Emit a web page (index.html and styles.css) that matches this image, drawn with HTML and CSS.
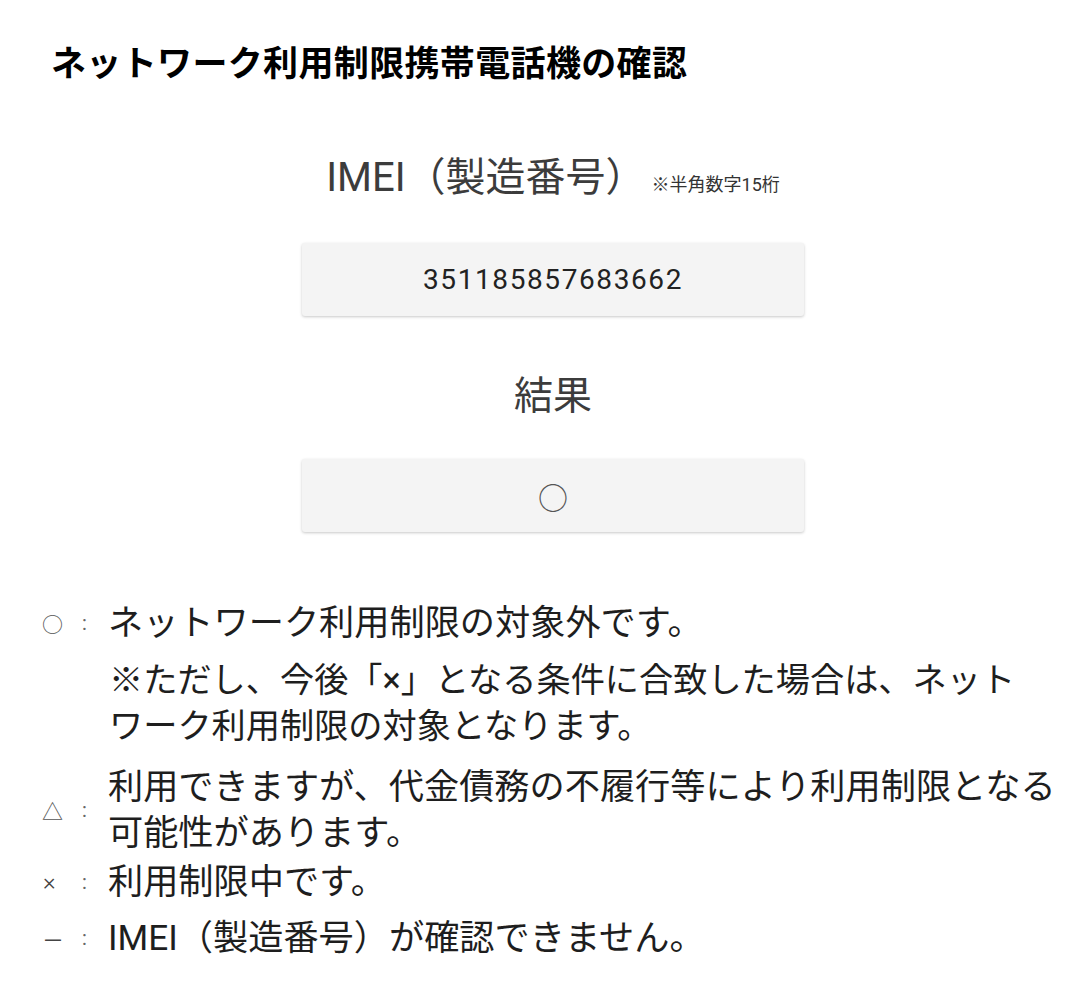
FILE: index.html
```html
<!DOCTYPE html>
<html lang="ja">
<head>
<meta charset="utf-8">
<title>ネットワーク利用制限携帯電話機の確認</title>
<link rel="stylesheet" href="styles.css">
</head>
<body>
<h1 class="page-title">ネットワーク利用制限携帯電話機の確認</h1>
<section class="check-form">
  <div class="field-label">IMEI（製造番号）<span class="field-note">※半角数字15桁</span></div>
  <div class="field-box field-box--imei">351185857683662</div>
  <div class="field-label field-label--result">結果</div>
  <div class="field-box field-box--result">○</div>
</section>
<section class="legend">
  <div class="legend-row legend-row--top">
    <span class="legend-sym legend-sym--circle">○</span>
    <span class="legend-colon">:</span>
    <div class="legend-text">
      <p class="legend-line">ネットワーク利用制限の対象外です。</p>
      <p class="legend-note">※ただし、今後「×」となる条件に合致した場合は、ネット<br>ワーク利用制限の対象となります。</p>
    </div>
  </div>
  <div class="legend-row legend-row--tri">
    <span class="legend-sym legend-sym--tri">△</span>
    <span class="legend-colon">:</span>
    <div class="legend-text">
      <p class="legend-line">利用できますが、代金債務の不履行等により利用制限となる<br>可能性があります。</p>
    </div>
  </div>
  <div class="legend-row legend-row--cross">
    <span class="legend-sym legend-sym--cross">×</span>
    <span class="legend-colon">:</span>
    <div class="legend-text">
      <p class="legend-line">利用制限中です。</p>
    </div>
  </div>
  <div class="legend-row legend-row--dash">
    <span class="legend-sym legend-sym--dash">－</span>
    <span class="legend-colon">:</span>
    <div class="legend-text">
      <p class="legend-line">IMEI（製造番号）が確認できません。</p>
    </div>
  </div>
</section>
</body>
</html>
```

FILE: styles.css
```css
html, body {
  margin: 0;
  padding: 0;
  background: #ffffff;
}

body {
  font-family: Roboto, "Noto Sans CJK JP", sans-serif;
  color: #1e1e1e;
  width: 1080px;
}

.page-title {
  margin: 0;
  padding: 36px 0 0 51px;
  font-family: "Noto Sans CJK JP", sans-serif;
  font-weight: 700;
  font-size: 35px;
  line-height: 50px;
  color: #000;
  letter-spacing: 0.35px;
}

.check-form {
  width: 502px;
  margin: 64px 0 0 302px;
  display: flex;
  flex-direction: column;
  align-items: stretch;
}

.field-label {
  text-align: center;
  font-size: 40px;
  line-height: 56px;
  height: 56px;
  color: #3c3c3c;
  font-weight: 400;
  white-space: nowrap;
}

.field-note {
  font-size: 18px;
  color: #333;
  margin-left: 6px;
}

.field-label--result {
  margin-top: 52px;
  font-size: 39px;
}

.field-box {
  height: 73px;
  background: #f4f4f4;
  border-radius: 3px;
  box-shadow: 0 1px 3px rgba(0, 0, 0, 0.22);
  display: flex;
  align-items: center;
  justify-content: center;
  color: #222;
}

.field-box--imei {
  margin-top: 37px;
  font-size: 28px;
  letter-spacing: 1.6px;
}

.field-box--result {
  margin-top: 35px;
  font-family: "Noto Sans CJK JP", sans-serif;
  font-size: 30px;
  color: #555;
}

.legend {
  margin-top: 68px;
  padding-left: 42px;
  display: flex;
  flex-direction: column;
}

.legend-row {
  display: grid;
  grid-template-columns: 26px 40px 1fr;
  align-items: start;
}

.legend-row--tri {
  margin-top: 15px;
  align-items: center;
}

.legend-row--cross {
  margin-top: 3px;
}

.legend-row--dash {
  margin-top: 10px;
}

.legend-sym {
  line-height: 46px;
  height: 46px;
  color: #555;
  font-family: "Noto Sans CJK JP", sans-serif;
  font-size: 21px;
}

.legend-sym--cross {
  font-family: Roboto, sans-serif;
  font-size: 24px;
  font-weight: 300;
  padding-left: 1px;
  color: #444;
}

.legend-sym--dash {
  font-family: "Noto Sans CJK JP", sans-serif;
  font-size: 22px;
  color: #444;
}

.legend-colon {
  line-height: 46px;
  height: 46px;
  font-size: 20px;
  color: #666;
  padding-left: 14px;
}

.legend-text {
  font-size: 35.2px;
  line-height: 46px;
  color: #1e1e1e;
}

.legend-line {
  margin: 0;
}

.legend-note {
  margin: 11px 0 0 1px;
  font-size: 34.2px;
}
```
